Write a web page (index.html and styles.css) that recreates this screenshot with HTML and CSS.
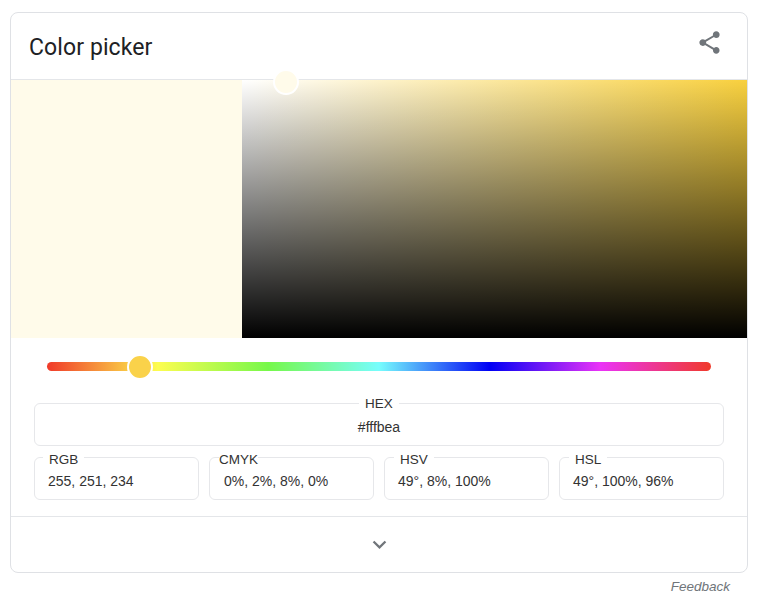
FILE: index.html
```html
<!DOCTYPE html>
<html lang="en">
<head>
    <meta charset="UTF-8">
    <title>Color picker</title>
    <link rel="stylesheet" href="styles.css">
</head>
<body>
<div class="page">
    <div class="card">
        <div class="card-head">
            <h1 class="title">Color picker</h1>
            <svg class="share" width="27" height="27" viewBox="0 0 24 24">
                <path d="M18 16.08c-.76 0-1.44.3-1.96.77L8.91 12.7c.05-.23.09-.46.09-.7s-.04-.47-.09-.7l7.05-4.11c.54.5 1.25.81 2.04.81 1.66 0 3-1.34 3-3s-1.34-3-3-3-3 1.34-3 3c0 .24.04.47.09.7L8.04 9.81C7.5 9.31 6.79 9 6 9c-1.66 0-3 1.34-3 3s1.34 3 3 3c.79 0 1.5-.31 2.04-.81l7.12 4.16c-.05.21-.08.43-.08.65 0 1.61 1.31 2.92 2.92 2.92s2.92-1.31 2.92-2.92-1.31-2.92-2.92-2.92z"/>
            </svg>
        </div>
        <div class="picker">
            <div class="swatch"></div>
            <div class="sat-box">
                <div class="sat-thumb"></div>
            </div>
        </div>
        <div class="controls">
            <div class="hue-row">
                <div class="hue-bar"></div>
                <div class="hue-thumb"></div>
            </div>
            <fieldset class="field field-hex">
                <legend>HEX</legend>
                <div class="value">#fffbea</div>
            </fieldset>
            <div class="field-row">
                <fieldset class="field field-rgb">
                    <legend>RGB</legend>
                    <div class="value">255, 251, 234</div>
                </fieldset>
                <fieldset class="field field-cmyk">
                    <legend>CMYK</legend>
                    <div class="value">0%, 2%, 8%, 0%</div>
                </fieldset>
                <fieldset class="field field-hsv">
                    <legend>HSV</legend>
                    <div class="value">49°, 8%, 100%</div>
                </fieldset>
                <fieldset class="field field-hsl">
                    <legend>HSL</legend>
                    <div class="value">49°, 100%, 96%</div>
                </fieldset>
            </div>
        </div>
        <div class="card-foot">
            <svg class="chevron" width="27" height="27" viewBox="0 0 24 24">
                <path d="M7.41 8.59L12 13.17l4.59-4.58L18 10l-6 6-6-6z"/>
            </svg>
        </div>
    </div>
    <div class="feedback">Feedback</div>
</div>
</body>
</html>
```

FILE: styles.css
```css
/*reset*/
body,h1,fieldset,legend{
    padding: 0;
    margin: 0;
}
body{
    font-family: "Liberation Sans",Arial,sans-serif;
    background: #fff;
    color: #202124;
}
.page{
    padding: 12px 16px 0 10px;
}
.card{
    height: 561px;
    box-sizing: border-box;
    border: 1px solid #dfe1e5;
    border-radius: 8px;
    overflow: hidden;
}
.card-head{
    height: 66px;
    display: flex;
    justify-content: space-between;
    border-bottom: 1px solid #e4e6e9;
}
.title{
    font-family: Roboto,sans-serif;
    font-size: 23px;
    font-weight: 400;
    letter-spacing: 0.1px;
    line-height: 28px;
    padding: 21px 0 0 18px;
}
.share{
    fill: #70757a;
    margin: 16px 24px 0 0;
}
/*picker*/
.picker{
    display: flex;
    height: 258px;
}
.swatch{
    width: 231px;
    background: #fffbea;
}
.sat-box{
    flex: 1;
    position: relative;
    background: linear-gradient(to top, #000, rgba(0,0,0,0)), linear-gradient(to right, #fff, #f8d03e);
}
.sat-thumb{
    position: absolute;
    left: 31px;
    top: -11px;
    width: 26px;
    height: 26px;
    box-sizing: border-box;
    border: 2px solid #fff;
    border-radius: 50%;
    background: #fffbea;
}
/*controls*/
.controls{
    padding: 24px 23px 0;
}
.hue-row{
    position: relative;
    height: 9px;
    padding: 0 13px;
}
.hue-bar{
    height: 9px;
    border-radius: 5px;
    background: linear-gradient(to right, #f03a2a, #fdfd50, #76f84a, #76fdfd, #0000f5, #ea33f7, #f03a2a);
}
.hue-thumb{
    position: absolute;
    left: 93px;
    top: -8px;
    width: 26px;
    height: 26px;
    box-sizing: border-box;
    border: 2px solid #fff;
    border-radius: 50%;
    background: #fad24a;
}
.field{
    border: 1px solid #e6e7ea;
    border-radius: 6px;
    min-width: 0;
    font-size: 14px;
    color: #333;
}
.field legend{
    padding: 0 6px;
    font-size: 13.5px;
    line-height: 15px;
}
.field-hex{
    margin-top: 25px;
    height: 48px;
    text-align: center;
}
.field-hex legend{
    margin: 0 auto;
}
.value{
    line-height: 15px;
}
.field-hex .value{
    padding-top: 9px;
}
.field-row{
    display: flex;
    gap: 10px;
    margin-top: 2px;
}
.field-row .field{
    flex: 1;
    height: 50px;
    padding: 0 13px;
}
.field-row legend{
    margin-left: -4px;
    padding-top: 4px;
}
.field-row .field-rgb legend{
    margin-left: -5px;
}
.field-row .value{
    padding-top: 7px;
}
.field-row .field-cmyk legend{
    padding: 4px 0 0;
    margin-left: -4px;
}
.field-cmyk .value{
    padding-left: 1px;
}
/*foot*/
.card-foot{
    margin-top: 16px;
    border-top: 1px solid #e4e6e9;
    display: flex;
    justify-content: center;
    padding-top: 14px;
}
.chevron{
    fill: #70757a;
}
.feedback{
    text-align: right;
    font-size: 13.5px;
    font-style: italic;
    color: #70757a;
    line-height: 15px;
    padding: 6px 18px 0 0;
}
```
